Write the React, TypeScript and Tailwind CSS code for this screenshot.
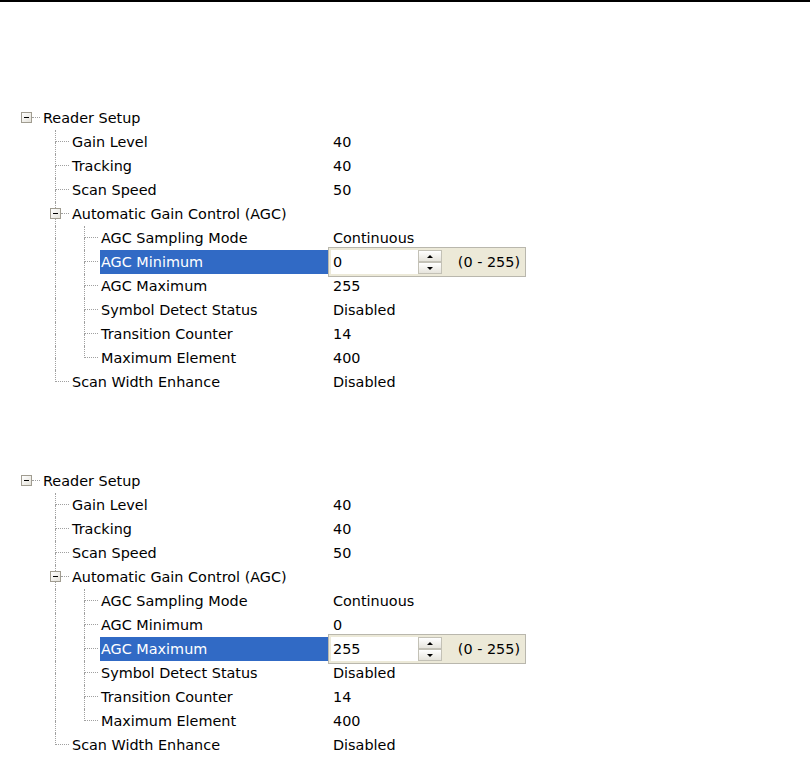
import React from "react";

type Cell = "none" | "pipe" | "tee" | "ell" | "root" | "box";

interface Row {
  label: string;
  value?: string;
  cells: Cell[];
}

const rows: Row[] = [
  { label: "Reader Setup", cells: ["root"] },
  { label: "Gain Level", value: "40", cells: ["none", "tee"] },
  { label: "Tracking", value: "40", cells: ["none", "tee"] },
  { label: "Scan Speed", value: "50", cells: ["none", "tee"] },
  { label: "Automatic Gain Control (AGC)", cells: ["none", "box"] },
  { label: "AGC Sampling Mode", value: "Continuous", cells: ["none", "pipe", "tee"] },
  { label: "AGC Minimum", value: "0", cells: ["none", "pipe", "tee"] },
  { label: "AGC Maximum", value: "255", cells: ["none", "pipe", "tee"] },
  { label: "Symbol Detect Status", value: "Disabled", cells: ["none", "pipe", "tee"] },
  { label: "Transition Counter", value: "14", cells: ["none", "pipe", "tee"] },
  { label: "Maximum Element", value: "400", cells: ["none", "pipe", "ell"] },
  { label: "Scan Width Enhance", value: "Disabled", cells: ["none", "ell"] },
];

const dot = "border-dotted border-[#a0a0a0]";

// little "minus" expander box
const Expander = () => (
  <div className="w-[11px] h-[11px] border border-[#a09c90] bg-gradient-to-br from-white to-[#e4e2da] flex items-center justify-center">
    <div className="w-[5px] h-[1px] bg-black" />
  </div>
);

const TreeCell: React.FC<{ type: Cell }> = ({ type }) => {
  if (type === "none") return <div className="w-[29px] shrink-0" />;

  if (type === "root" || type === "box") {
    const line = type === "box";
    return (
      <div className="w-[29px] shrink-0 flex flex-col">
        <div className={`h-[6px] w-[14px] ${line ? `border-r ${dot}` : ""}`} />
        <div className="h-[11px] flex items-center">
          <div className="w-[8px]" />
          <Expander />
          <div className={`w-[8px] h-0 border-t ${dot}`} />
        </div>
        <div className={`h-[7px] w-[14px] ${line ? `border-r ${dot}` : ""}`} />
      </div>
    );
  }

  const bottom = type === "pipe" || type === "tee";
  const horiz = type === "tee" || type === "ell";
  return (
    <div className="w-[29px] shrink-0 flex flex-col">
      <div className="h-[12px] flex">
        <div className={`w-[14px] border-r ${dot}`} />
        <div className={`w-[13px] ${horiz ? `border-b ${dot}` : ""}`} />
      </div>
      <div className={`h-[12px] w-[14px] ${bottom ? `border-r ${dot}` : ""}`} />
    </div>
  );
};

const Spinner = () => (
  <div className="w-[24px] h-[24px] flex flex-col">
    <div className="h-[12px] border border-[#c3c1b6] bg-gradient-to-b from-white to-[#e6e4dc] flex items-center justify-center">
      <div className="w-0 h-0 border-l-[3px] border-r-[3px] border-b-[3px] border-l-transparent border-r-transparent border-b-black" />
    </div>
    <div className="h-[12px] border border-[#c3c1b6] bg-gradient-to-b from-white to-[#e6e4dc] flex items-center justify-center">
      <div className="w-0 h-0 border-l-[3px] border-r-[3px] border-t-[3px] border-l-transparent border-r-transparent border-t-black" />
    </div>
  </div>
);

const Editor: React.FC<{ value: string }> = ({ value }) => (
  <div className="relative z-10 -my-[3px] w-[198px] h-[30px] border border-[#b9b7ad] bg-[#ece9d8] flex items-center px-[2px]">
    <div className="w-[87px] h-[24px] bg-white pl-[2px] pt-[1px] flex items-center">{value}</div>
    <Spinner />
    <div className="ml-auto pr-[3px] pt-[1px]">(0 - 255)</div>
  </div>
);

const Tree: React.FC<{ selected: string }> = ({ selected }) => (
  <div className="flex flex-col">
    {rows.map((r) => {
      const sel = r.label === selected;
      return (
        <div key={r.label} className="h-[24px] flex items-center">
          <div className="w-[315px] h-full flex shrink-0">
            {r.cells.map((c, i) => (
              <TreeCell key={i} type={c} />
            ))}
            <div
              className={`flex-1 flex items-center pl-[1px] pt-[1px] whitespace-nowrap ${
                sel ? "bg-[#316ac5] text-white" : ""
              }`}
            >
              {r.label}
            </div>
          </div>
          {sel && r.value ? (
            <Editor value={r.value} />
          ) : (
            <div className="pl-[5px] pt-[1px] whitespace-nowrap">{r.value}</div>
          )}
        </div>
      );
    })}
  </div>
);

export default function App() {
  return (
    <div
      className="w-[810px] h-[760px] bg-white text-black text-[14.4px] overflow-hidden"
      style={{ fontFamily: '"DejaVu Sans", Verdana, sans-serif' }}
    >
      <div className="h-[2px] bg-black" />
      <div className="pt-[104px] pl-[13px] flex flex-col gap-[75px]">
        <Tree selected="AGC Minimum" />
        <Tree selected="AGC Maximum" />
      </div>
    </div>
  );
}
